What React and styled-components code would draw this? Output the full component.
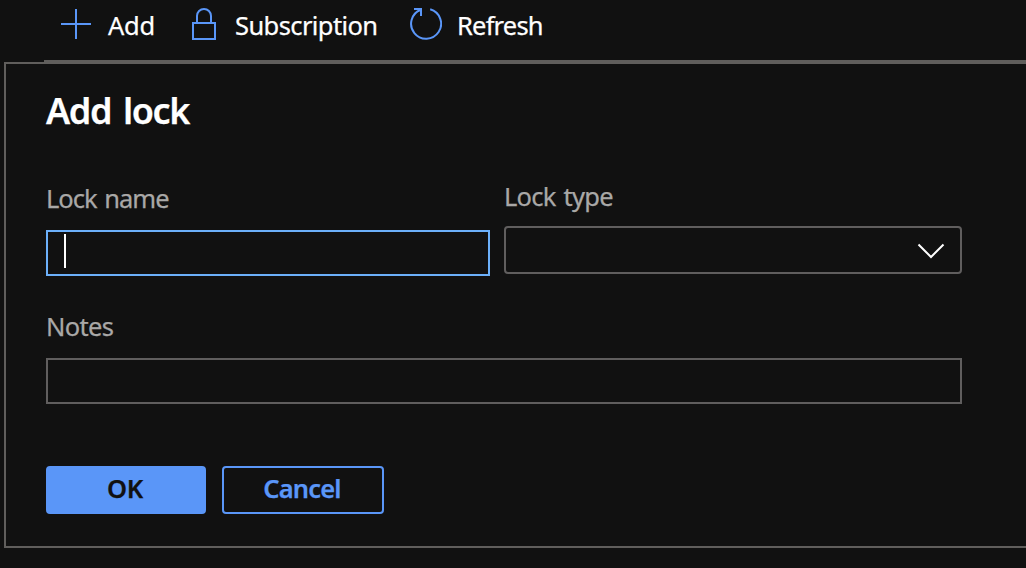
import React from "react";
import styled, { createGlobalStyle } from "styled-components";

const GlobalStyle = createGlobalStyle`
  * { box-sizing: border-box; }
  body {
    margin: 0;
    background: #111111;
    color: #ffffff;
    font-family: "Noto Sans", "Open Sans", sans-serif;
    font-size: 25.5px;
    line-height: 34px;
    overflow: hidden;
    -webkit-text-stroke: 0.25px;
  }
`;

const Page = styled.div`
  width: 1026px;
  height: 568px;
  overflow: hidden;
  background: #111111;
`;

const Toolbar = styled.div`
  display: flex;
  height: 62px;
  margin-left: 44px;
  padding-left: 16px;
  border-bottom: 2px solid #605e5c;
`;

const Command = styled.div`
  display: flex;
  align-items: center;
  gap: ${(p) => p.$gap}px;
  width: ${(p) => p.$width}px;
  height: 50px;
  white-space: nowrap;
  svg { flex: none; display: block; }
`;

const Text = styled.span`
  letter-spacing: ${(p) => p.$spacing || 0}px;
`;

const Panel = styled.section`
  height: 486px;
  margin-left: 4px;
  padding: 23px 0 0 40px;
  border: 2px solid #605e5c;
  border-right: 0;
`;

const Title = styled.h1`
  margin: 0;
  font-size: 36px;
  line-height: 48px;
  font-weight: 600;
  letter-spacing: ${(p) => p.$spacing || 0}px;
  word-spacing: 4px;
`;

const Fields = styled.div`
  display: flex;
  gap: 14px;
  width: 916px;
  height: 128px;
  margin-top: 44px;
`;

const Field = styled.div`
  width: ${(p) => p.$width}px;
  padding-top: ${(p) => p.$top || 0}px;
`;

const Label = styled.label`
  display: block;
  height: 34px;
  color: #a9a8a7;
  letter-spacing: ${(p) => p.$spacing || 0}px;
  word-spacing: 2px;
`;

const Input = styled.div`
  height: 46px;
  margin-top: 15px;
  padding: 2px 16px;
  border: 2px solid ${(p) => (p.$focused ? "#6cb0fa" : "#605e5e")};
`;

const Caret = styled.div`
  width: 2px;
  height: 34px;
  background: #ffffff;
`;

const Select = styled.div`
  display: flex;
  align-items: center;
  justify-content: flex-end;
  height: 48px;
  margin-top: 13px;
  padding-right: 15px;
  border: 2px solid #605e5e;
  border-radius: 4px;
`;

const Actions = styled.div`
  display: flex;
  gap: 16px;
  margin-top: 62px;
`;

const Button = styled.button`
  width: ${(p) => p.$width}px;
  height: 48px;
  padding: 0 2px 4px 0;
  border: 2px solid #5a96f8;
  border-radius: 4px;
  background: ${(p) => (p.$primary ? "#5a96f8" : "transparent")};
  color: ${(p) => (p.$primary ? "#111111" : "#5a96f8")};
  font: inherit;
  font-weight: 600;
  letter-spacing: ${(p) => p.$spacing || 0}px;
`;

const Icon = (props) => (
  <svg width="32" height="50" viewBox="0 0 32 50" fill="none" stroke="#5a96f8" strokeWidth="2" {...props} />
);

export default function App() {
  return (
    <Page>
      <GlobalStyle />
      <Toolbar>
        <Command $width={128} $gap={16}>
          <Icon><path d="M1 24H31M16 9V39" /></Icon>
          <Text $spacing={-0.3}>Add</Text>
        </Command>
        <Command $width={222} $gap={15}>
          <Icon><path d="M5 23H27V39H5ZM9 23V16A7 7 0 0 1 23 16V23" /></Icon>
          <Text $spacing={-0.6}>Subscription</Text>
        </Command>
        <Command $width={150} $gap={15}>
          <Icon><path d="M20.2 9.3A15 15 0 1 1 10.8 9.7M4 9H11V16" /></Icon>
          <Text $spacing={-0.8}>Refresh</Text>
        </Command>
      </Toolbar>
      <Panel>
        <Title $spacing={-1.4}>Add lock</Title>
        <Fields>
          <Field $width={444} $top={2}>
            <Label $spacing={-1}>Lock name</Label>
            <Input $focused><Caret /></Input>
          </Field>
          <Field $width={458}>
            <Label $spacing={-0.75}>Lock type</Label>
            <Select>
              <svg width="28" height="18" viewBox="0 0 28 18" fill="none" stroke="#fff" strokeWidth="2">
                <path d="M1.5 3.5L14 16L26.5 3.5" />
              </svg>
            </Select>
          </Field>
        </Fields>
        <Field $width={916} $top={2}>
          <Label $spacing={-0.65}>Notes</Label>
          <Input />
        </Field>
        <Actions>
          <Button $primary $width={160} $spacing={-0.3}>OK</Button>
          <Button $width={162} $spacing={-0.85}>Cancel</Button>
        </Actions>
      </Panel>
    </Page>
  );
}
